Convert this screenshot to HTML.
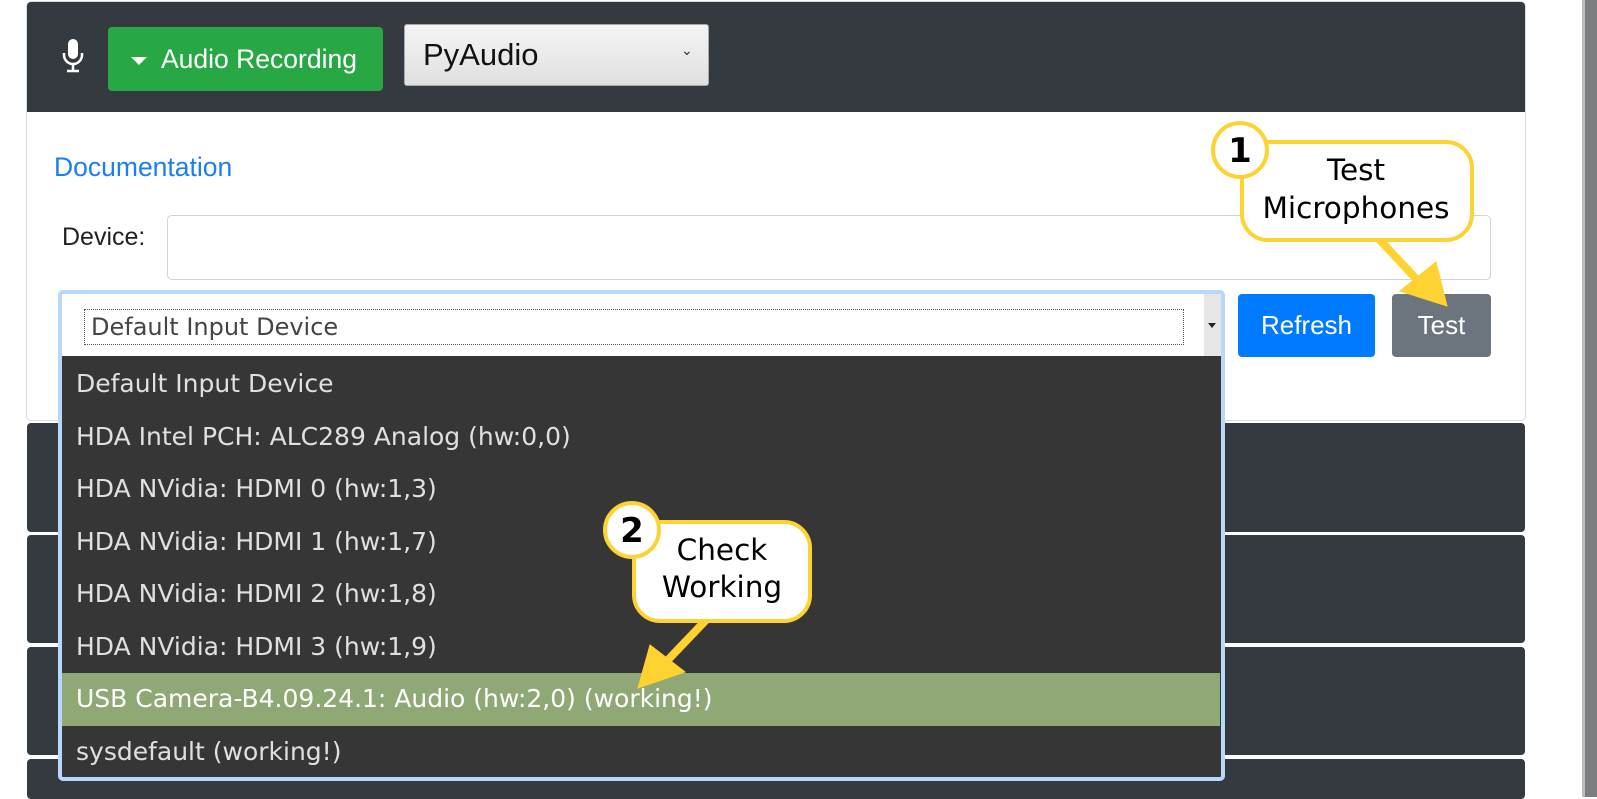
<!DOCTYPE html>
<html><head><meta charset="utf-8"><style>
*{box-sizing:border-box;margin:0;padding:0}
body{width:1597px;height:797px;background:#fff;position:relative;overflow:hidden;font-family:"Liberation Sans",sans-serif}
.abs{position:absolute}
.dark{background:#343a40}
</style></head><body>
<div class="abs" style="left:1582px;top:0;width:4px;height:797px;background:#bdbdbd"></div>
<div class="abs" style="left:1585px;top:0;width:12px;height:797px;background:#7c7f7f"></div>

<div class="abs" style="left:26px;top:1px;width:1500px;height:420px;border:1px solid #dcdcdc;border-radius:5px;background:#fff"></div>
<div class="abs dark" style="left:27px;top:2px;width:1498px;height:110px;border-radius:4px 4px 0 0"></div>
<!-- mic -->
<svg class="abs" style="left:60px;top:38px" width="26" height="36" viewBox="0 0 26 36">
<rect x="8" y="1" width="10" height="20" rx="5" fill="#fff"/>
<path d="M4 15v2a9 9 0 0 0 18 0v-2" stroke="#fff" stroke-width="2.5" fill="none"/>
<path d="M13 26v6M7 33h12" stroke="#fff" stroke-width="2.5"/>
</svg>
<div class="abs" style="left:108px;top:27px;width:275px;height:64px;background:#28a745;border-radius:4px;color:#fff;font-size:26.5px;line-height:64px;padding-left:53px">Audio Recording</div>
<div class="abs" style="left:131px;top:57px;width:0;height:0;border-left:8px solid transparent;border-right:8px solid transparent;border-top:8px solid #fff"></div>
<div class="abs" style="left:404px;top:24px;width:305px;height:62px;background:linear-gradient(#f4f4f4,#e0e0e0);border:1px solid #aaa;border-radius:3px;font-size:31px;line-height:60px;padding-left:18px;color:#111">PyAudio</div>
<div class="abs" style="left:681px;top:42px;font-size:14px;color:#333">&#8964;</div>

<div class="abs" style="left:54px;top:152px;color:#1a7ef5;font-size:26.5px">Documentation</div>
<div class="abs" style="left:62px;top:223px;color:#222;font-size:25px">Device:</div>
<div class="abs" style="left:167px;top:215px;width:1324px;height:65px;border:1px solid #ced4da;border-radius:5px"></div>

<div class="abs" style="left:1238px;top:294px;width:137px;height:63px;background:#007bff;border-radius:4px;color:#fff;font-size:26px;line-height:63px;text-align:center">Refresh</div>
<div class="abs" style="left:1392px;top:294px;width:99px;height:63px;background:#6c757d;border-radius:4px;color:#fff;font-size:26px;line-height:63px;text-align:center">Test</div>

<div class="abs dark" style="left:27px;top:423px;width:1498px;height:109px;border-radius:4px"></div>
<div class="abs dark" style="left:27px;top:535px;width:1498px;height:108px;border-radius:4px"></div>
<div class="abs dark" style="left:27px;top:647px;width:1498px;height:108px;border-radius:4px"></div>
<div class="abs dark" style="left:27px;top:759px;width:1498px;height:40px;border-radius:4px"></div>

<!-- dropdown -->
<div class="abs" style="left:58px;top:290px;width:1167px;height:491px;border:4px solid #b8d7fb;border-radius:5px;background:#363636"></div>
<div class="abs" style="left:62px;top:294px;width:1159px;height:62px;background:#fff"></div>
<div class="abs" style="left:1204px;top:294px;width:17px;height:62px;background:#e6e6e6"></div>
<div class="abs" style="left:1208px;top:323px;border-left:4px solid transparent;border-right:4px solid transparent;border-top:5px solid #222"></div>
<div class="abs" style="left:84px;top:309px;width:1100px;height:36px;border:1px dotted #555;font-family:'DejaVu Sans',sans-serif;font-size:24px;line-height:34px;padding-left:6px;color:#444">Default Input Device</div>
<div class="abs" style="left:62px;top:358px;width:1158px;font-family:'DejaVu Sans',sans-serif;font-size:25px;color:#e0e0e0">
<div style="height:52.5px;line-height:52px;padding-left:14px">Default Input Device</div>
<div style="height:52.5px;line-height:52px;padding-left:14px">HDA Intel PCH: ALC289 Analog (hw:0,0)</div>
<div style="height:52.5px;line-height:52px;padding-left:14px">HDA NVidia: HDMI 0 (hw:1,3)</div>
<div style="height:52.5px;line-height:52px;padding-left:14px">HDA NVidia: HDMI 1 (hw:1,7)</div>
<div style="height:52.5px;line-height:52px;padding-left:14px">HDA NVidia: HDMI 2 (hw:1,8)</div>
<div style="height:52.5px;line-height:52px;padding-left:14px">HDA NVidia: HDMI 3 (hw:1,9)</div>
<div style="height:52.5px;line-height:52px;padding-left:14px;background:#8fa876;color:#fff">USB Camera-B4.09.24.1: Audio (hw:2,0) (working!)</div>
<div style="height:52.5px;line-height:52px;padding-left:14px">sysdefault (working!)</div>
</div>

<!-- callouts -->
<svg class="abs" style="left:0;top:0" width="1597" height="797">
<g stroke="#fdd231" fill="#fdd231">
<path d="M1378 238L1420 283" stroke-width="8"/>
<polygon points="1400,291 1436,262 1447,306"/>
<path d="M708 618L665 663" stroke-width="8"/>
<polygon points="638,688 650,645 685,672"/>
</g>
<rect x="1242" y="142" width="230" height="98" rx="26" fill="#fff" stroke="#fdd231" stroke-width="4"/>
<circle cx="1240" cy="150" r="27" fill="#fff" stroke="#fdd231" stroke-width="4"/>
<rect x="634" y="522" width="176" height="99" rx="26" fill="#fff" stroke="#fdd231" stroke-width="4"/>
<circle cx="632" cy="530" r="27" fill="#fff" stroke="#fdd231" stroke-width="4"/>
<g font-family="DejaVu Sans,sans-serif" font-size="29.5" fill="#000" text-anchor="middle">
<text x="1356" y="180">Test</text><text x="1356" y="218">Microphones</text>
<text x="722" y="560">Check</text><text x="722" y="597">Working</text>
<text x="1240" y="162" font-weight="bold" font-size="34">1</text>
<text x="632" y="542" font-weight="bold" font-size="34">2</text>
</g>
</svg>
</body></html>
